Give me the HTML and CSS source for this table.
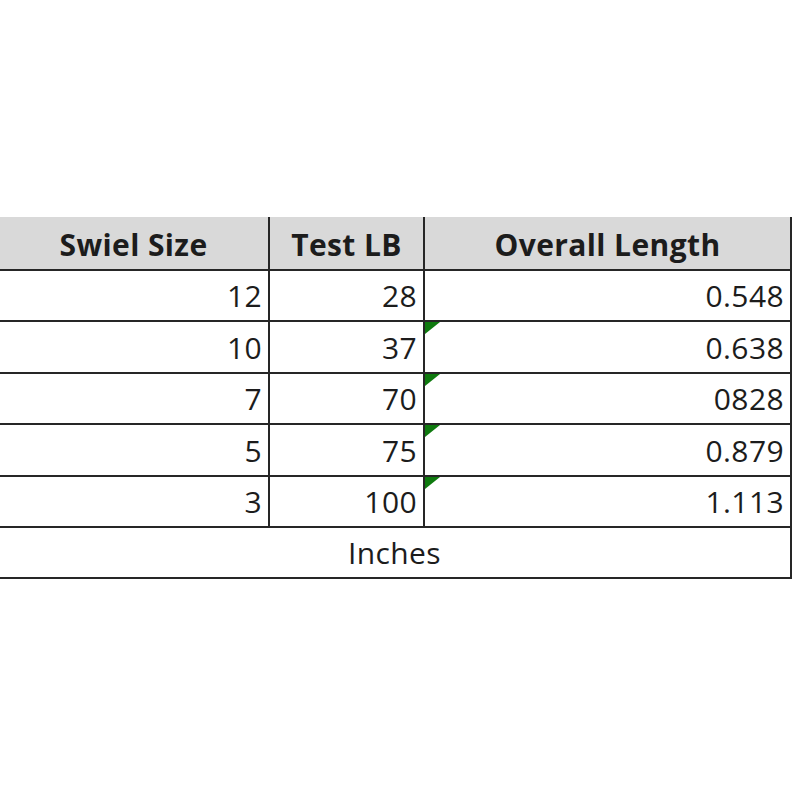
FILE: index.html
```html
<!DOCTYPE html>
<html>
<head>
<meta charset="utf-8">
<link rel="stylesheet" href="styles.css">
</head>
<body>
<div class="sheet">
  <table class="grid">
    <colgroup>
      <col class="c1"><col class="c2"><col class="c3">
    </colgroup>
    <thead>
      <tr class="head">
        <th>Swiel Size</th>
        <th>Test LB</th>
        <th>Overall Length</th>
      </tr>
    </thead>
    <tbody>
      <tr><td>12</td><td>28</td><td class="len">0.548</td></tr>
      <tr><td>10</td><td>37</td><td class="len flag">0.638</td></tr>
      <tr><td>7</td><td>70</td><td class="len flag">0828</td></tr>
      <tr><td>5</td><td>75</td><td class="len flag">0.879</td></tr>
      <tr><td>3</td><td>100</td><td class="len flag">1.113</td></tr>
      <tr><td class="unit" colspan="3">Inches</td></tr>
    </tbody>
  </table>
</div>
</body>
</html>
```
FILE: styles.css
```css
html, body {
  margin: 0;
  padding: 0;
  background: #ffffff;
}
.sheet {
  padding-top: 217px;
  margin-left: -3px;
}
.grid {
  border-collapse: collapse;
  table-layout: fixed;
  width: 793px;
  font-family: "Open Sans", Lato, sans-serif;
  font-size: 30px;
  letter-spacing: 0.4px;
  color: #1c1c1c;
}
.c1 { width: 271px; }
.c2 { width: 155px; }
.c3 { width: 367px; }
.grid th, .grid td {
  border: 2px solid #262626;
  padding: 0 6px 6px 6px;
  vertical-align: bottom;
  line-height: 36px;
  box-sizing: border-box;
}
.head th {
  background: #d9d9d9;
  font-weight: bold;
  text-align: center;
  height: 53px;
  border-top: none;
}
.grid td {
  text-align: right;
  height: 51.4px;
}
.grid td.unit {
  text-align: center;
}
.len { position: relative; }
.flag::before {
  content: "";
  position: absolute;
  left: 0;
  top: 0;
  width: 0;
  height: 0;
  border-top: 12px solid #0f7a0f;
  border-right: 15px solid transparent;
}
```
